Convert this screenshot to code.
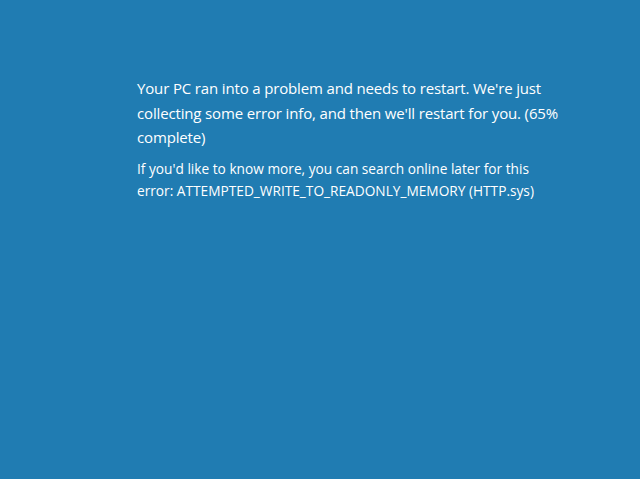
import React from 'react';

const App = () => {
    return (
        <div
            className="w-full h-screen bg-[#207cb2] text-white overflow-hidden"
            style={{ fontFamily: '"Open Sans", "Noto Sans", sans-serif' }}
        >
            <div className="pt-[76px] pl-[137px]">
                <p className="w-[432px] text-[15px] leading-[24.5px] tracking-[-0.15px]">
                    Your PC ran into a problem and needs to restart. We're just collecting some error info, and then we'll restart for you. (65% complete)
                </p>
                <p className="w-[410px] mt-[8px] text-[13.7px] leading-[22px]">
                    If you'd like to know more, you can search online later for this error: ATTEMPTED_WRITE_TO_READONLY_MEMORY (HTTP.sys)
                </p>
            </div>
        </div>
    );
};

export default App;
